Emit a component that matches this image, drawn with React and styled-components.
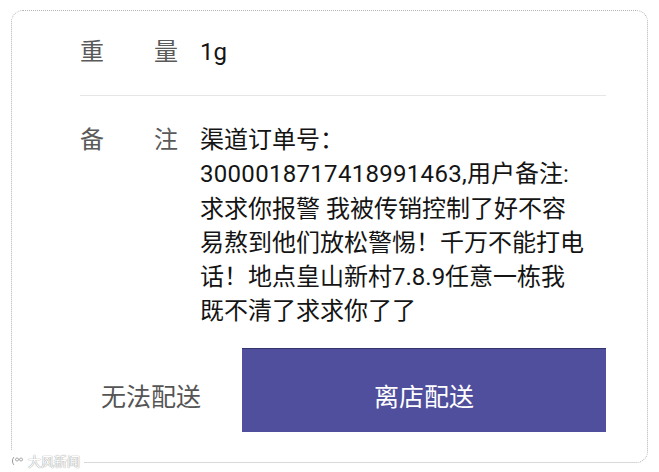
import React from 'react';
import styled, { createGlobalStyle } from 'styled-components';

const GlobalStyle = createGlobalStyle`
  html, body {
    margin: 0;
    padding: 0;
    background: #fff;
  }
  body {
    font-family: Roboto, 'Noto Sans CJK SC', sans-serif;
  }
`;

const Page = styled.div`
  width: 659px;
  height: 472px;
  padding: 10px 0 0 11px;
  box-sizing: border-box;
`;

const Card = styled.div`
  position: relative;
  width: 637px;
  height: 453px;
  box-sizing: border-box;
  border: 1px dotted #b4b4b4;
  border-radius: 12px;
  padding: 24px 41px 0 68px;
  display: flex;
  flex-direction: column;
`;

const Row = styled.div`
  display: flex;
  align-items: flex-start;
  gap: 22px;
  font-size: 24px;
  line-height: 34.2px;
`;

const Label = styled.div`
  width: 98px;
  flex: none;
  display: flex;
  justify-content: space-between;
  color: #5a5a5a;
`;

const Value = styled.div`
  color: #141414;
  white-space: nowrap;
`;

const Number = styled.span`
  letter-spacing: 0.3px;
`;

const Divider = styled.div`
  height: 1px;
  background: #e6e6e6;
  margin: ${p => p.$top}px 0 ${p => p.$bottom}px;
`;

const Actions = styled.div`
  display: flex;
  margin-top: ${p => p.$top}px;
  height: 84px;
  gap: 20px;
`;

const Button = styled.div`
  display: flex;
  align-items: center;
  justify-content: center;
  padding-top: 9px;
  font-size: 25px;
  color: ${p => (p.$primary ? '#ffffff' : '#555555')};
  background: ${p => (p.$primary ? '#4f4f9d' : 'transparent')};
  border-top: ${p => (p.$primary ? '1px solid #34346c' : 'none')};
  width: ${p => (p.$primary ? 'auto' : '142px')};
  flex: ${p => (p.$primary ? '1' : 'none')};
  box-sizing: border-box;
`;

const Watermark = styled.div`
  position: absolute;
  left: -5px;
  bottom: -9px;
  display: flex;
  align-items: center;
  gap: 3px;
  padding: 1px 4px;
  background: #fff;
  font-size: 13px;
  color: #fff;
  text-shadow: 0 0 1px #9a9a9a, 0 0 1px #9a9a9a;
`;

export default function App() {
  return (
    <>
      <GlobalStyle />
      <Page>
        <Card>
          <Row>
            <Label>
              <span>重</span>
              <span>量</span>
            </Label>
            <Value>1g</Value>
          </Row>
          <Divider $top={26} $bottom={27} />
          <Row>
            <Label>
              <span>备</span>
              <span>注</span>
            </Label>
            <Value>
              渠道订单号：
              <br />
              <Number>3000018717418991463,</Number>用户备注:
              <br />
              求求你报警 我被传销控制了好不容
              <br />
              易熬到他们放松警惕！千万不能打电
              <br />
              话！地点皇山新村7.8.9任意一栋我
              <br />
              既不清了求求你了了
            </Value>
          </Row>
          <Actions $top={20}>
            <Button>无法配送</Button>
            <Button $primary>离店配送</Button>
          </Actions>
          <Watermark>
            <svg width="14" height="12" viewBox="0 0 14 12">
              <path d="M3 2 C1 4 1 8 3 10 M6 3 a1.5 1.5 0 1 0 0.1 0 M10 3 a1.5 1.5 0 1 0 0.1 0" fill="none" stroke="#9a9a9a" strokeWidth="1" />
            </svg>
            <span>大风新闻</span>
          </Watermark>
        </Card>
      </Page>
    </>
  );
}
